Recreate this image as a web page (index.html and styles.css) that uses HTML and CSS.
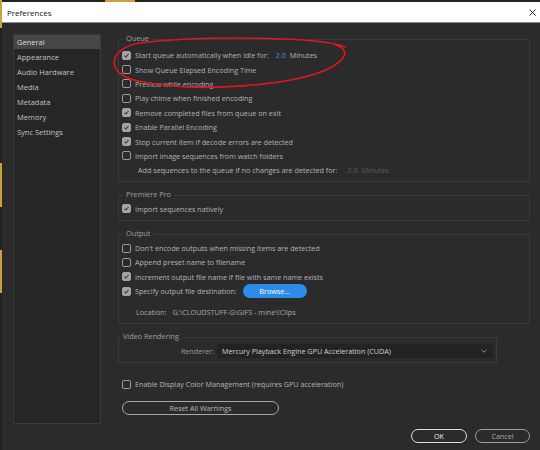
FILE: index.html
```html
<!DOCTYPE html>
<html>
<head>
<meta charset="utf-8">
<title>Preferences</title>
<link rel="stylesheet" href="styles.css">
</head>
<body>
<div class="window">
  <div class="titlebar">
    <span class="title">Preferences</span>
    <svg class="close" width="7" height="7" viewBox="0 0 7 7"><path d="M0.5 0.5 L6.5 6.5 M6.5 0.5 L0.5 6.5" stroke="#222" stroke-width="1" fill="none"/></svg>
  </div>
  <div class="content">
    <nav class="sidebar">
      <div class="nav-item active">General</div>
      <div class="nav-item">Appearance</div>
      <div class="nav-item">Audio Hardware</div>
      <div class="nav-item">Media</div>
      <div class="nav-item">Metadata</div>
      <div class="nav-item">Memory</div>
      <div class="nav-item">Sync Settings</div>
    </nav>
    <main class="main">
      <fieldset class="group">
        <legend>Queue</legend>
        <div class="row"><span class="cb checked"><svg viewBox="0 0 9 9"><path d="M2 4.7 L3.8 6.4 L7 2.6"/></svg></span><span>Start queue automatically when idle for:</span><span class="val">2.0</span><span>Minutes</span></div>
        <div class="row"><span class="cb"></span><span>Show Queue Elapsed Encoding Time</span></div>
        <div class="row"><span class="cb"></span><span>Preview while encoding</span></div>
        <div class="row"><span class="cb"></span><span>Play chime when finished encoding</span></div>
        <div class="row"><span class="cb checked"><svg viewBox="0 0 9 9"><path d="M2 4.7 L3.8 6.4 L7 2.6"/></svg></span><span>Remove completed files from queue on exit</span></div>
        <div class="row"><span class="cb checked"><svg viewBox="0 0 9 9"><path d="M2 4.7 L3.8 6.4 L7 2.6"/></svg></span><span>Enable Parallel Encoding</span></div>
        <div class="row"><span class="cb checked"><svg viewBox="0 0 9 9"><path d="M2 4.7 L3.8 6.4 L7 2.6"/></svg></span><span>Stop current item if decode errors are detected</span></div>
        <div class="row"><span class="cb"></span><span>Import image sequences from watch folders</span></div>
        <div class="row sub"><span>Add sequences to the queue if no changes are detected for:</span><span class="val disabled">2.0</span><span class="disabled">Minutes</span></div>
      </fieldset>

      <fieldset class="group">
        <legend>Premiere Pro</legend>
        <div class="row"><span class="cb checked"><svg viewBox="0 0 9 9"><path d="M2 4.7 L3.8 6.4 L7 2.6"/></svg></span><span>Import sequences natively</span></div>
      </fieldset>

      <fieldset class="group output">
        <legend>Output</legend>
        <div class="row"><span class="cb"></span><span>Don't encode outputs when missing items are detected</span></div>
        <div class="row"><span class="cb"></span><span>Append preset name to filename</span></div>
        <div class="row"><span class="cb checked"><svg viewBox="0 0 9 9"><path d="M2 4.7 L3.8 6.4 L7 2.6"/></svg></span><span>Increment output file name if file with same name exists</span></div>
        <div class="row"><span class="cb checked"><svg viewBox="0 0 9 9"><path d="M2 4.7 L3.8 6.4 L7 2.6"/></svg></span><span>Specify output file destination:</span><button class="browse">Browse...</button></div>
        <div class="row location"><span>Location:</span><span class="path">G:\CLOUDSTUFF-G\GIFS - mine\!Clips</span></div>
      </fieldset>

      <fieldset class="group video">
        <legend>Video Rendering</legend>
        <div class="render-row">
          <span class="render-label">Renderer:</span>
          <div class="select">
            <span>Mercury Playback Engine GPU Acceleration (CUDA)</span>
            <svg width="6" height="4" viewBox="0 0 6 4"><path d="M0.5 0.8 L3 3.2 L5.5 0.8" stroke="#8a8a8a" stroke-width="1" fill="none"/></svg>
          </div>
        </div>
      </fieldset>

      <div class="row standalone"><span class="cb"></span><span>Enable Display Color Management (requires GPU acceleration)</span></div>

      <button class="btn reset">Reset All Warnings</button>

      <div class="actions">
        <button class="btn ok">OK</button>
        <button class="btn cancel">Cancel</button>
      </div>
    </main>
  </div>
</div>
<svg class="annotation" width="540" height="450" viewBox="0 0 540 450">
  <path d="M345 47 C 322 37, 205 35, 140 43 C 108 48, 104 74, 138 81 C 198 94, 294 85, 328 69 C 347 59, 351 50, 334 44" stroke="#e0161c" stroke-width="1.6" fill="none" stroke-linecap="round"/>
</svg>
</body>
</html>
```

FILE: styles.css
```css
* { box-sizing: border-box; }

body {
  margin: 0;
  width: 540px;
  height: 450px;
  overflow: hidden;
  font-family: "Open Sans", "Noto Sans", sans-serif;
  background-color: #222222;
  background-image:
    linear-gradient(#c9a23a, #c9a23a),
    linear-gradient(#c9a23a, #c9a23a),
    linear-gradient(#c9a23a, #c9a23a),
    linear-gradient(#c9a23a, #c9a23a);
  background-repeat: no-repeat;
  background-size: 2px 28px, 2px 44px, 2px 43px, 30px 2px;
  background-position: 0 0, 0 163px, 0 250px, 105px 0;
}

.window {
  margin: 2px 0 0 2px;
  width: 538px;
  height: 448px;
  background: #2b2b2b;
  display: flex;
  flex-direction: column;
}

.titlebar {
  height: 21px;
  flex: none;
  background: #ffffff;
  border-bottom: 1px solid #8e8e8e;
  display: flex;
  align-items: center;
  justify-content: space-between;
  padding: 0 4px 0 5px;
}

.title {
  font-size: 8px;
  color: #111;
}

.close { display: block; }

.content {
  flex: 1;
  display: flex;
  gap: 17px;
  padding: 10px 8px 0 11px;
}

.sidebar {
  width: 88px;
  height: 390px;
  margin-top: 1px;
  border: 1px solid #3a3a3a;
  background: #262626;
  flex: none;
}

.nav-item {
  height: 14px;
  margin-bottom: 1px;
  line-height: 14px;
  padding-left: 3px;
  font-size: 7.5px;
  color: #c2c2c2;
}

.nav-item.active {
  background: #474747;
  color: #d8d8d8;
}

.main {
  width: 412px;
  display: flex;
  flex-direction: column;
}

fieldset.group {
  margin: 0;
  min-width: 0;
  border: 1px solid #3a3a3a;
  padding: 2px 3px 3px 3px;
}

fieldset.group + fieldset.group {
  margin-top: 7px;
  padding-top: 0;
  padding-bottom: 4px;
}

fieldset.group legend {
  font-size: 7.3px;
  line-height: 10px;
  padding: 0 3px 3px 3px;
  margin-left: 1px;
  color: #a0a0a0;
}

fieldset.output { padding-bottom: 5px; }

fieldset.video {
  width: 379px;
  padding: 3px 2px 1px 0;
}

.row {
  height: 14.4px;
  display: flex;
  align-items: center;
  gap: 4px;
  font-size: 7.2px;
  color: #b3b3b3;
  white-space: nowrap;
}

.cb {
  width: 9px;
  height: 9px;
  flex: none;
  border: 1px solid #9a9a9a;
  border-radius: 2px;
  display: flex;
  align-items: center;
  justify-content: center;
}

.cb.checked {
  background: #a3a3a3;
  border-color: #a3a3a3;
}

.cb svg {
  width: 9px;
  height: 9px;
  display: block;
}

.cb svg path {
  stroke: #333;
  stroke-width: 1.3;
  fill: none;
}

.val {
  color: #3d90ec;
  margin-left: 3px;
}

.sub { padding-left: 16px; }

.val.disabled, .disabled { color: #5c5c5c; }
.sub .val.disabled { margin-left: 6px; }

.browse {
  margin-left: 2px;
  width: 64px;
  height: 14px;
  border: none;
  border-radius: 7px;
  background: #2d8bea;
  color: #ffffff;
  font-family: inherit;
  font-size: 7.2px;
  padding: 0;
}

.location {
  margin-top: 6px;
  padding-left: 14px;
  gap: 6px;
  color: #a8a8a8;
}

.render-row {
  display: flex;
  align-items: center;
  gap: 3px;
}

.render-label {
  width: 95px;
  text-align: right;
  font-size: 7.2px;
  color: #9a9a9a;
}

.select {
  width: 276px;
  height: 14px;
  background: #232323;
  border-radius: 2px;
  display: flex;
  align-items: center;
  justify-content: space-between;
  padding: 0 6px 0 5px;
  font-size: 7.2px;
  color: #d0d0d0;
}

.select svg { display: block; }

.standalone {
  margin-top: 14px;
  padding-left: 4px;
}

.btn {
  height: 14px;
  border-radius: 7px;
  background: transparent;
  font-family: inherit;
  font-size: 7.2px;
  padding: 0;
}

.reset {
  margin-top: 10px;
  margin-left: 4px;
  width: 157px;
  border: 1px solid #a8a8a8;
  color: #b8b8b8;
}

.actions {
  margin-top: 14px;
  display: flex;
  justify-content: flex-end;
  gap: 8px;
}

.ok {
  width: 56px;
  border: 1.5px solid #dedede;
  color: #f2f2f2;
}

.cancel {
  width: 55px;
  border: 1px solid #9e9e9e;
  color: #a8a8a8;
}

.annotation {
  position: absolute;
  left: 0;
  top: 0;
  pointer-events: none;
}
```
